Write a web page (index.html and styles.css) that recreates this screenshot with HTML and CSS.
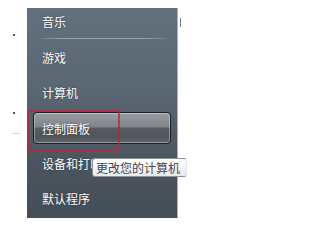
FILE: index.html
```html
<!DOCTYPE html>
<html lang="zh-CN">
<head>
<meta charset="utf-8">
<link rel="stylesheet" href="styles.css">
</head>
<body>
<div class="page">
  <span class="speck speck-a"></span>
  <span class="speck speck-b"></span>
  <span class="speck speck-c"></span>
  <span class="speck speck-d"></span>
  <div class="menu">
    <div class="item item-first">音乐</div>
    <div class="separator"></div>
    <div class="item">游戏</div>
    <div class="item">计算机</div>
    <div class="item item-active">控制面板</div>
    <div class="item">设备和打印机</div>
    <div class="item">默认程序</div>
    <div class="mark"></div>
    <div class="tooltip">更改您的计算机</div>
  </div>
</div>
</body>
</html>
```

FILE: styles.css
```css
html, body {
  margin: 0;
  padding: 0;
  background: #ffffff;
  overflow: hidden;
}

.page {
  position: relative;
  width: 237px;
  height: 218px;
  padding-top: 8px;
  box-sizing: border-box;
  font-family: "Noto Sans CJK SC", "Noto Sans", sans-serif;
}

.menu {
  position: relative;
  margin-left: 27px;
  width: 150px;
  height: 210px;
  border-right: 1px solid #aab1b8;
  background: linear-gradient(#63707d 0%, #5a6672 40%, #4b545e 75%, #454d56 100%);
  display: flex;
  flex-direction: column;
}

.item {
  height: 33px;
  margin: 0 6px 3px 6px;
  padding-left: 8px;
  display: flex;
  align-items: center;
  box-sizing: border-box;
  color: #ffffff;
  font-size: 12px;
  letter-spacing: 0;
  white-space: nowrap;
  text-shadow: 0 0 2px rgba(0, 0, 0, 0.45);
  border: 1px solid transparent;
  border-radius: 4px;
}

.item-first {
  height: 28px;
  margin-bottom: 0;
}

.separator {
  height: 1px;
  margin: 3px 10px 2px 14px;
  background: linear-gradient(90deg, rgba(160,172,184,0.3), rgba(170,182,194,0.75) 20%, rgba(170,182,194,0.75) 80%, rgba(160,172,184,0.2));
}

.item-active {
  border-color: #1b1f24;
  background: linear-gradient(#9a9ea3 0%, #80858b 45%, #565b61 52%, #50555b 80%, #5e646b 100%);
  box-shadow: inset 0 0 0 1px rgba(255, 255, 255, 0.35);
}

.mark {
  position: absolute;
  left: 0;
  top: 102px;
  width: 93px;
  height: 41px;
  box-sizing: border-box;
  border: 2px solid rgba(190, 36, 60, 0.75);
}

.tooltip {
  position: absolute;
  left: 65px;
  top: 150px;
  width: 95px;
  height: 19px;
  box-sizing: border-box;
  padding-left: 3px;
  display: flex;
  align-items: center;
  border: 1px solid #8c8f96;
  border-right-color: #e4e4ea;
  border-radius: 3px;
  background: linear-gradient(#ffffff, #e8e9f0);
  color: #474747;
  font-size: 12px;
  white-space: nowrap;
}

.speck {
  position: absolute;
  display: block;
  background: #555;
}

.speck-a { left: 13px; top: 34px; width: 2px; height: 2px; }
.speck-b { left: 13px; top: 112px; width: 2px; height: 2px; }
.speck-c { left: 12px; top: 133px; width: 8px; height: 1px; background: #d6d6d6; }
.speck-d { left: 180px; top: 18px; width: 1px; height: 9px; background: #777; }
```
